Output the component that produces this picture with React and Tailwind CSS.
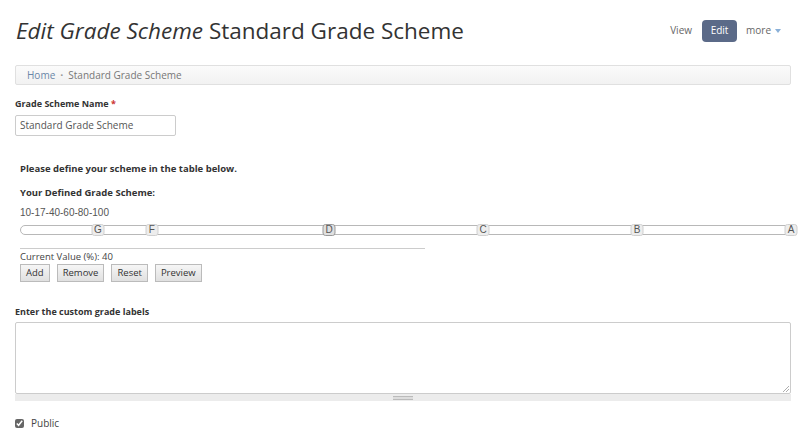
import React from 'react';

const grades = [
  { label: 'G', value: 10 },
  { label: 'F', value: 17 },
  { label: 'D', value: 40, active: true },
  { label: 'C', value: 60 },
  { label: 'B', value: 80 },
  { label: 'A', value: 100 },
];

function GradeSlider() {
  return (
    <div className="relative h-[10px] ml-[20px] mr-[8px] mt-[7px] rounded-l-[5px] border border-[#b8b8b8] bg-white">
      {grades.map((g) => (
        <span
          key={g.label}
          className={`absolute top-[-2px] -translate-x-1/2 w-[13px] h-[12px] flex items-center justify-center rounded-[3px] border text-[10px] leading-none font-['Liberation_Sans',sans-serif] text-[#555] ${
            g.active ? 'border-[#999] bg-[#e0e0e0] text-[#333]' : 'border-[#d0d0d0] bg-[#ededed]'
          }`}
          style={{ left: `${g.value}%` }}
        >
          {g.label}
        </span>
      ))}
    </div>
  );
}

export default function App() {
  const btn =
    'h-[18px] px-[5px] border border-[#bbb] bg-gradient-to-b from-[#f6f6f6] to-[#e0e0e0] text-[9.5px] text-[#333] leading-none';

  return (
    <div className="w-[800px] h-[434px] overflow-hidden bg-white font-['Open_Sans',sans-serif] text-[#333]">
      {/* Header */}
      <div className="flex items-center justify-between pl-[16px] pr-[19px] pt-[10px] h-[52px]">
        <h1 className="text-[22.5px] leading-none text-[#333]">
          <em className="italic">Edit Grade Scheme</em> Standard Grade Scheme
        </h1>
        <div className="flex items-center text-[10px] text-[#666] mt-[-1px]">
          <span>View</span>
          <span className="ml-[10px] bg-[#5b6a88] text-white rounded-[4px] w-[35px] h-[22px] flex items-center justify-center">Edit</span>
          <span className="ml-[9px] flex items-center gap-[4px]">
            more
            <svg width="6" height="4" viewBox="0 0 6 4"><path d="M0 0h6L3 4z" fill="#8ab0d8" /></svg>
          </span>
        </div>
      </div>

      {/* Breadcrumb */}
      <div className="mx-[15px] mr-[9px] mt-[13px] h-[20px] border border-[#e0e0e0] bg-gradient-to-b from-[#fbfbfb] to-[#f2f2f2] rounded-[2px] flex items-center pl-[11px] text-[10px]">
        <span className="text-[#6a86a8]">Home</span>
        <span className="text-[#999] mx-[5px] text-[8px]">•</span>
        <span className="text-[#777]">Standard Grade Scheme</span>
      </div>

      {/* Name */}
      <div className="px-[15px] mt-[14px]">
        <label className="block text-[9px] font-bold text-[#333] leading-none">
          Grade Scheme Name <span className="text-[#c33]">*</span>
        </label>
        <div className="mt-[7px] w-[161px] h-[21px] border border-[#ccc] rounded-[2px] flex items-center pl-[4px] text-[10px] text-[#555]">
          Standard Grade Scheme
        </div>
      </div>

      {/* Scheme */}
      <div className="mt-[28px]">
        <p className="pl-[20px] text-[9.5px] font-bold text-[#333] leading-none">Please define your scheme in the table below.</p>
        <p className="pl-[20px] mt-[14px] text-[9.5px] font-bold text-[#333] leading-none">Your Defined Grade Scheme:</p>
        <p className="pl-[20px] mt-[11px] text-[10px] text-[#555] leading-none font-['Liberation_Sans',sans-serif]">10-17-40-60-80-100</p>
        <GradeSlider />
        <div className="ml-[20px] w-[405px] mt-[13px] border-t border-[#ccc]"></div>
        <p className="pl-[20px] mt-[1px] text-[9.5px] text-[#444] leading-[14px]">Current Value (%): 40</p>
        <div className="pl-[20px] flex gap-[7px]">
          <button className={btn}>Add</button>
          <button className={btn}>Remove</button>
          <button className={btn}>Reset</button>
          <button className={btn}>Preview</button>
        </div>
      </div>

      {/* Labels */}
      <div className="px-[15px] pr-[9px] mt-[25px]">
        <label className="block text-[9px] font-bold text-[#333] leading-none">Enter the custom grade labels</label>
        <div className="mt-[6px] relative h-[72px] border border-[#ccc] rounded-[2px] bg-white">
          <svg className="absolute right-[1px] bottom-[1px]" width="6" height="6" viewBox="0 0 6 6">
            <path d="M6 0L0 6M6 3L3 6" stroke="#999" strokeWidth="0.8" />
          </svg>
        </div>
        <div className="h-[7px] bg-[#ececec] flex items-center justify-center">
          <div className="w-[20px] h-[4px] border-y border-[#bbb] bg-[#ddd]"></div>
        </div>
      </div>

      {/* Public */}
      <div className="pl-[15px] mt-[15px] flex items-center gap-[7px] text-[10px] text-[#444]">
        <input type="checkbox" defaultChecked className="w-[9px] h-[9px] m-0 accent-[#666]" />
        <span>Public</span>
      </div>
    </div>
  );
}
